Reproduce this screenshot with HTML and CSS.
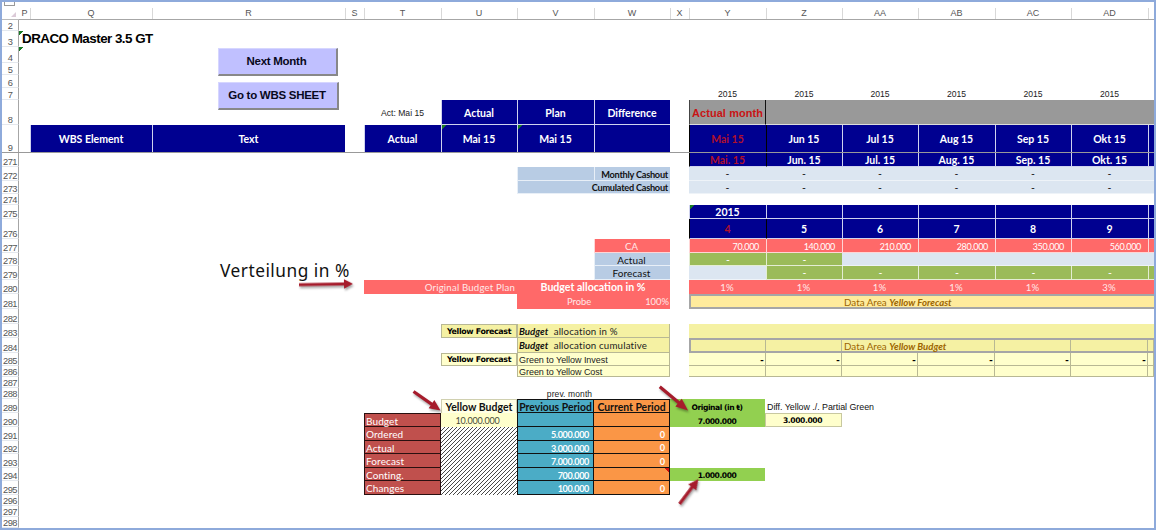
FILE: index.html
```html
<!DOCTYPE html>
<html lang="de">
<head>
<meta charset="utf-8">
<title>DRACO Master</title>
<link rel="stylesheet" href="styles.css">
</head>
<body>
<main class="sheet">
  <div class="corner r1 hd"><span class="outline-tab"></span><svg class="tri" viewBox="0 0 5 5"><path d="M5 0V5H0Z"/></svg></div>
  <div class="ch p r1">P</div><div class="ch q r1">Q</div><div class="ch r r1">R</div><div class="ch s r1">S</div><div class="ch t r1">T</div><div class="ch u r1">U</div><div class="ch v r1">V</div><div class="ch w r1">W</div><div class="ch x r1">X</div><div class="ch y r1">Y</div><div class="ch z r1">Z</div><div class="ch aa r1">AA</div><div class="ch ab r1">AB</div><div class="ch ac r1">AC</div><div class="ch ad r1">AD</div><div class="ch ae r1"></div>

  <div class="rh r2">2</div><div class="rh r3">3</div><div class="rh r4">4</div><div class="rh r5">5</div><div class="rh r6">6</div><div class="rh r7">7</div><div class="rh r8">8</div><div class="rh r9">9</div>
  <div class="rh r271">271</div><div class="rh r272">272</div><div class="rh r273">273</div><div class="rh r274">274</div><div class="rh r275">275</div><div class="rh r276">276</div><div class="rh r277">277</div><div class="rh r278">278</div><div class="rh r279">279</div><div class="rh r280">280</div><div class="rh r281">281</div><div class="rh r282">282</div><div class="rh r283">283</div><div class="rh r284">284</div><div class="rh r285">285</div><div class="rh r286">286</div><div class="rh r287">287</div><div class="rh r288">288</div><div class="rh r289">289</div><div class="rh r290">290</div><div class="rh r291">291</div><div class="rh r292">292</div><div class="rh r293">293</div><div class="rh r294">294</div><div class="rh r295">295</div><div class="rh r296">296</div><div class="rh r297">297</div><div class="rh r298">298</div>

  <h1 class="title r3">DRACO Master 3.5 GT</h1>
  <div class="p r3 note"></div><div class="p r4 note"></div>
  <div class="buttons">
    <button class="btn">Next Month</button>
    <button class="btn wide">Go to WBS SHEET</button>
  </div>

  <div class="y r7 year">2015</div><div class="z r7 year">2015</div><div class="aa r7 year">2015</div><div class="ab r7 year">2015</div><div class="ac r7 year">2015</div><div class="ad r7 year">2015</div>

  <div class="t r8 act">Act: Mai 15</div>
  <div class="u r8 navy">Actual</div><div class="v r8 navy">Plan</div><div class="w r8 navy">Difference</div>
  <div class="y r8 grey month">Actual month</div><div class="rest r8 grey"></div>

  <div class="q r9 navy">WBS Element</div><div class="r r9 navy">Text</div>
  <div class="t r9 navy">Actual</div><div class="u r9 navy note">Mai 15</div><div class="v r9 navy note">Mai 15</div><div class="w r9 navy"></div>
  <div class="y r9 navy now">Mai 15</div><div class="z r9 navy">Jun 15</div><div class="aa r9 navy">Jul 15</div><div class="ab r9 navy">Aug 15</div><div class="ac r9 navy">Sep 15</div><div class="ad r9 navy">Okt 15</div><div class="ae r9 navy"></div>
  <div class="freeze r9"></div>

  <div class="y r271 navy now">Mai. 15</div><div class="z r271 navy">Jun. 15</div><div class="aa r271 navy">Jul. 15</div><div class="ab r271 navy">Aug. 15</div><div class="ac r271 navy">Sep. 15</div><div class="ad r271 navy">Okt. 15</div><div class="ae r271 navy"></div>

  <div class="v r272 blue"></div><div class="w r272 blue strong">Monthly Cashout</div>
  <div class="vw r273 blue strong">Cumulated Cashout</div>
  <div class="y r272 pale">-</div><div class="z r272 pale">-</div><div class="aa r272 pale">-</div><div class="ab r272 pale">-</div><div class="ac r272 pale">-</div><div class="ad r272 pale">-</div><div class="ae r272 pale"></div>
  <div class="y r273 pale">-</div><div class="z r273 pale">-</div><div class="aa r273 pale">-</div><div class="ab r273 pale">-</div><div class="ac r273 pale">-</div><div class="ad r273 pale">-</div><div class="ae r273 pale"></div>

  <div class="y r275 navy note">2015</div><div class="z r275 navy"></div><div class="aa r275 navy"></div><div class="ab r275 navy"></div><div class="ac r275 navy"></div><div class="ad r275 navy"></div><div class="ae r275 navy"></div>
  <div class="y r276 navy now">4</div><div class="z r276 navy">5</div><div class="aa r276 navy">6</div><div class="ab r276 navy">7</div><div class="ac r276 navy">8</div><div class="ad r276 navy">9</div><div class="ae r276 navy"></div>

  <div class="w r277 red">CA</div>
  <div class="y r277 red num">70.000</div><div class="z r277 red num">140.000</div><div class="aa r277 red num">210.000</div><div class="ab r277 red num">280.000</div><div class="ac r277 red num">350.000</div><div class="ad r277 red num">560.000</div><div class="ae r277 red"></div>
  <div class="w r278 blue">Actual</div>
  <div class="y r278 green">-</div><div class="z r278 green">-</div><div class="aae r278 pale"></div>
  <div class="w r279 blue">Forecast</div>
  <div class="y r279 pale"></div><div class="z r279 green">-</div><div class="aa r279 green">-</div><div class="ab r279 green">-</div><div class="ac r279 green">-</div><div class="ad r279 green">-</div><div class="ae r279 green"></div>

  <div class="caption">Verteilung in %</div>

  <div class="tu r280 red flat plan">Original Budget Plan</div><div class="vw r280 red flat alloc">Budget allocation in %</div>
  <div class="vw r281 red flat probe"><span>Probe</span><span>100%</span></div>
  <div class="y r280 red flat">1%</div><div class="z r280 red flat">1%</div><div class="aa r280 red flat">1%</div><div class="ab r280 red flat">1%</div><div class="ac r280 red flat">1%</div><div class="ad r280 red flat">3%</div><div class="ae r280 red flat"></div>
  <div class="yae r281 area forecast"></div><div class="aab r281 arealabel">Data Area&nbsp;<em>Yellow Forecast</em></div>

  <div class="u r283 tag deep">Yellow Forecast</div><div class="vw r283 line deep"><em>Budget</em>&nbsp; allocation in %</div>
  <div class="vw r284 line deep"><em>Budget</em>&nbsp; allocation cumulative</div>
  <div class="u r285 tag">Yellow Forecast</div><div class="vw r285 line tight">Green to Yellow Invest</div>
  <div class="vw r286 line tight">Green to Yellow Cost</div>

  <div class="yae r283 deepband"></div>
  <div class="y r284 ycell deep"></div><div class="z r284 ycell deep"></div><div class="aab r284 ycell deep"></div><div class="ac r284 ycell deep"></div><div class="ad r284 ycell deep"></div><div class="ae r284 ycell deep"></div>
  <div class="yae r284 area"></div><div class="aab r284 arealabel">Data Area&nbsp;<em>Yellow Budget</em></div>
  <div class="y r285 ycell">-</div><div class="z r285 ycell">-</div><div class="aa r285 ycell">-</div><div class="ab r285 ycell">-</div><div class="ac r285 ycell">-</div><div class="ad r285 ycell">-</div><div class="ae r285 ycell"></div>
  <div class="y r286 ycell"></div><div class="z r286 ycell"></div><div class="aa r286 ycell"></div><div class="ab r286 ycell"></div><div class="ac r286 ycell"></div><div class="ad r286 ycell"></div><div class="ae r286 ycell"></div>

  <div class="v r288 prev">prev. month</div>
  <div class="u r289 yhead">Yellow Budget</div><div class="v r289 teal head">Previous Period</div><div class="w r289 orange head">Current Period</div>
  <div class="t r290 brick">Budget</div><div class="u r290 ybudget">10.000.000</div><div class="v r290 teal"></div><div class="w r290 orange"></div>
  <div class="t r291 brick">Ordered</div><div class="v r291 teal">5.000.000</div><div class="w r291 orange">0</div>
  <div class="t r292 brick">Actual</div><div class="v r292 teal">3.000.000</div><div class="w r292 orange">0</div>
  <div class="t r293 brick">Forecast</div><div class="v r293 teal">7.000.000</div><div class="w r293 orange">0</div>
  <div class="t r294 brick">Conting.</div><div class="v r294 teal">700.000</div><div class="w r294 orange comment"></div>
  <div class="t r295 brick">Changes</div><div class="v r295 teal">100.000</div><div class="w r295 orange">0</div>
  <svg class="hatch" width="76" height="68"><defs><pattern id="diag" width="4" height="4" patternUnits="userSpaceOnUse"><path d="M-1 1L1 -1M0 4L4 0M3 5L5 3" stroke="#333" stroke-width=".9"/></pattern></defs><rect width="76" height="68" fill="url(#diag)"/></svg>

  <div class="xy r289 lime">Original (in ŧ)</div><div class="xy r290 lime">7.000.000</div><div class="xy r294 lime">1.000.000</div>
  <div class="zaa r289 diff">Diff. Yellow ./. Partial Green</div><div class="z r290 diffval">3.000.000</div>
</main>
<svg class="arrows" width="1156" height="530" viewBox="0 0 1156 530">
  <defs>
    <g id="arrow"><path d="M0 0L-9 -4.8V-1.5H-54V1.4H-9V4.8Z"/></g>
    <g id="short"><path d="M0 0L-11 -5V-1.7H-33V1.5H-11V5Z"/></g>
  </defs>
  <g class="ink">
    <use href="#arrow" transform="translate(353 283.8) rotate(-1)"/>
    <use href="#short" transform="translate(440.500 410.500) rotate(35)"/>
    <use href="#short" transform="translate(688 410.500) rotate(40) scale(1.12 1)"/>
    <use href="#short" transform="translate(698.500 479) rotate(-53) scale(.95 1)"/>
  </g>
</svg>
</body>
</html>
```
FILE: styles.css
```css
* { box-sizing: border-box; }
body { margin: 0; width: 1156px; height: 530px; overflow: hidden; background: #fff; font-family: Lato, sans-serif; }

.sheet {
  display: grid;
  width: 1156px;
  height: 530px;
  border: 2px solid #8eaadb;
  grid-template-columns: 17px 11px 122px 193px 19px 77px 76px 77px 76px 19px 77px 76px 76px 77px 76px 77px 6px;
  grid-template-rows:
    18px 11px 16px 16px 12px 13px 12px 25px 28px
    14px 14px 13px 11px 14px 20px 14px 13px 14px 14px
    15px 15px 14px 15px 13px 11px 11px 11px 14px 14px
    14px 13px 14px 13px 14px 11px 11px 11px;
}
.sheet > div { display: flex; align-items: center; justify-content: center; min-width: 0; min-height: 0; white-space: nowrap; line-height: 1; font-size: 10.5px; padding-top: 2px; }

/* columns */
.hd, .sheet > .rh { grid-column: 1; }
.p { grid-column: 2; } .q { grid-column: 3; } .r { grid-column: 4; } .s { grid-column: 5; }
.t { grid-column: 6; } .u { grid-column: 7; } .v { grid-column: 8; } .w { grid-column: 9; } .x { grid-column: 10; }
.y { grid-column: 11; } .z { grid-column: 12; } .aa { grid-column: 13; } .ab { grid-column: 14; }
.ac { grid-column: 15; } .ad { grid-column: 16; } .ae { grid-column: 17; }
.tu { grid-column: 6 / 8; } .vw { grid-column: 8 / 10; } .xy { grid-column: 10 / 12; } .zaa { grid-column: 12 / 14; }
.aab { grid-column: 13 / 15; } .aae { grid-column: 13 / 18; } .yae { grid-column: 11 / 18; } .rest { grid-column: 12 / 18; }

/* rows */
.r1 { grid-row: 1; } .r2 { grid-row: 2; } .r3 { grid-row: 3; } .r4 { grid-row: 4; } .r5 { grid-row: 5; }
.r6 { grid-row: 6; } .r7 { grid-row: 7; } .r8 { grid-row: 8; } .r9 { grid-row: 9; }
.r271 { grid-row: 10; } .r272 { grid-row: 11; } .r273 { grid-row: 12; } .r274 { grid-row: 13; } .r275 { grid-row: 14; }
.r276 { grid-row: 15; } .r277 { grid-row: 16; } .r278 { grid-row: 17; } .r279 { grid-row: 18; } .r280 { grid-row: 19; }
.r281 { grid-row: 20; } .r282 { grid-row: 21; } .r283 { grid-row: 22; } .r284 { grid-row: 23; } .r285 { grid-row: 24; }
.r286 { grid-row: 25; } .r287 { grid-row: 26; } .r288 { grid-row: 27; } .r289 { grid-row: 28; } .r290 { grid-row: 29; }
.r291 { grid-row: 30; } .r292 { grid-row: 31; } .r293 { grid-row: 32; } .r294 { grid-row: 33; } .r295 { grid-row: 34; }
.r296 { grid-row: 35; } .r297 { grid-row: 36; } .r298 { grid-row: 37; }

/* headings of the grid */
.sheet > .ch { font: 9px/1 "Liberation Sans", sans-serif; color: #555; padding-top: 6px; border-bottom: 1px solid #a6a6a6; background: linear-gradient(#d8d8d8, #d8d8d8) left bottom / 1px 11px no-repeat; }
.sheet > .ch.p { background: none; }
.sheet > .corner { position: relative; border-bottom: 1px solid #bbb; }
.outline-tab { position: absolute; left: 2px; top: 0; width: 11px; height: 4px; border: 1px solid #999; border-top: 0; }
.tri { position: absolute; right: 3px; bottom: 2px; width: 5px; height: 5px; fill: #dccbd8; }
.sheet > .rh { align-items: flex-end; font: 9.3px/8px "Liberation Sans", sans-serif; letter-spacing: -.5px; color: #555; border-right: 1px solid #a6a6a6; border-bottom: 1px solid #e4e8ee; padding: 0; }

.title { grid-column: 2 / 4; margin: 0; padding-left: 3px; font: bold 13.4px/16px "Liberation Sans", sans-serif; letter-spacing: -.52px; color: #000; white-space: nowrap; }
.note { background-image: linear-gradient(135deg, #197a26 3px, transparent 3.5px); background-repeat: no-repeat; }
.sheet > .buttons { grid-column: 4; grid-row: 4 / 9; flex-direction: column; align-items: flex-start; justify-content: flex-start; gap: 6px; padding: 1px 0 0 66px; }
.btn { width: 120px; height: 28px; padding: 0 2px 0 0; border: 1px solid #d6d6ff; border-right: 2px solid #888; border-bottom: 2px solid #888; background: #c0c0ff; font: bold 11.5px/1 "Liberation Sans", sans-serif; color: #080820; letter-spacing: -.28px; }
.wide { width: 121px; }

.sheet > .year { font: 8.6px/1 "Liberation Sans", sans-serif; color: #222; align-items: flex-end; padding-bottom: 1px; }
.sheet > .act { font: 8.6px/1 "Liberation Sans", sans-serif; color: #222; padding-top: 1px; }
.sheet > .navy { background-color: #000090; color: #fff; font-weight: bold; border-left: 1px solid #cfd2ee; border-bottom: 1px solid #cfd2ee; padding-right: 1px; }
.sheet > .now { color: #b0102c; border-left-color: #000; }
.sheet > .now + .navy { border-left-color: #000; }
.sheet > .grey { background: #999; border-bottom: 1px solid #ddd; }
.sheet > .month { color: #c81414; font: bold 10.9px/1 "Liberation Sans", sans-serif; border-left: 1px solid #444; border-right: 1px solid #111; letter-spacing: .12px; }
.sheet > .freeze { grid-column: 1 / 18; align-self: end; height: 1px; background: #999; padding: 0; }

.sheet > .blue { background: #b8cce4; color: #111; border-left: 1px solid #e8eff7; border-bottom: 1px solid #e8eff7; letter-spacing: .1px; font-size: 10px; padding: 1px 2px 0 0; }
.sheet > .strong { font-weight: bold; justify-content: flex-end; padding-top: 2px; font-size: 9.2px; letter-spacing: -.25px; }
.sheet > .pale { background: #dce6f1; border-bottom: 1px solid #eef3f8; color: #222; }
.sheet > .red { background: #ff6969; color: #ffe8e8; border-left: 1px solid #ffd5d5; border-bottom: 1px solid #ffd5d5; font-size: 9.6px; padding-right: 2px; }
.sheet > .num { justify-content: flex-end; padding-right: 7px; font-size: 9px; letter-spacing: -.3px; color: #fff; }
.sheet > .flat { border-color: transparent; }
.sheet > .plan { justify-content: flex-end; padding-right: 2px; letter-spacing: .2px; }
.sheet > .alloc { color: #fff; font-weight: bold; font-size: 10.6px; }
.sheet > .probe { justify-content: space-between; padding: 1px 1px 0 49px; font-size: 9.4px; }
.sheet > .green { background: #9bbb59; color: #fff; border-left: 1px solid #e4edd3; border-bottom: 1px solid #e4edd3; }

.sheet > .caption { grid-column: 4; grid-row: 17 / 20; justify-content: flex-start; padding: 0 0 6px 68px; font: 17.3px/1 "Noto Sans", sans-serif; letter-spacing: .5px; color: #111; }

.sheet > .area { border: 2px solid #a6a6a6; border-right: 0; z-index: 1; }
.sheet > .forecast { background: #ffeb9c; }
.sheet > .arealabel { z-index: 2; justify-content: flex-start; padding-left: 2px; color: #9c6500; font-size: 9.8px; }
.arealabel em { font-weight: bold; font-size: 9.6px; }
.sheet > .deepband { background: #f5f1a3; }
.sheet > .tag { background: #ffffcc; font: bold 7.9px/1 "DejaVu Sans", sans-serif; color: #000; border: 1px solid #b8b894; letter-spacing: -.35px; padding-top: 1px; }
.sheet > .line { background: #ffffcc; justify-content: flex-start; padding-left: 1px; border: 1px solid #b8b894; border-top: 0; color: #222; font-size: 9.7px; letter-spacing: .18px; }
.sheet > .tight { font: 9px/1 "Liberation Sans", sans-serif; letter-spacing: -.04px; }
.line em { font-weight: bold; letter-spacing: 0; color: #111; }
.sheet > .ycell { background: #ffffcc; border-right: 1px solid #b8b894; border-bottom: 1px solid #b8b894; justify-content: flex-end; padding-right: 1px; color: #000; font-weight: bold; }
.sheet > .tag.deep, .sheet > .line.deep, .sheet > .ycell.deep { background: #f5f1a3; }

.sheet > .prev { font: 8.5px/1 "Liberation Sans", sans-serif; color: #222; padding-left: 28px; letter-spacing: .1px; }
.sheet > .yhead { background: #ffffe6; font-weight: bold; border: 1px solid #d0d0b0; border-bottom: 0; color: #111; font-size: 10.5px; }
.sheet > .ybudget { background: #ffffcc; color: #4a4a3a; font-size: 9px; letter-spacing: -.2px; padding: 1px 3px 0 0; }
.sheet > .brick { background: #c0504d; color: #fff; border: 1px solid #2a1010; border-top: 0; justify-content: flex-start; padding: 1px 0 0 1px; font-size: 10px; letter-spacing: .1px; }
.sheet > .brick.r290 { border-top: 1px solid #2a1010; }
.sheet > .teal { background: #4bacc6; color: #fff; border: 1px solid #111; border-top: 0; justify-content: flex-end; padding-right: 4px; font-weight: bold; font-size: 9px; letter-spacing: -.3px; }
.sheet > .orange { background: #fa9646; color: #fff; border-right: 1px solid #111; border-bottom: 1px solid #111; justify-content: flex-end; padding-right: 4px; font-weight: bold; font-size: 9.2px; }
.sheet > .head { border-top: 1px solid #111; color: #111; justify-content: center; padding: 2px 0 0; font-size: 10.4px; letter-spacing: 0; }
.sheet > .comment { background: linear-gradient(225deg, #d01010 3px, transparent 3.5px), #fa9646; }
.hatch { grid-column: 7; grid-row: 30 / 35; background: #fff; }
.sheet > .lime { background: #92d050; font: bold 7.6px/1 "DejaVu Sans", sans-serif; color: #000; letter-spacing: -.45px; padding-right: 1px; padding-top: 3px; margin-right: 1px; }
.sheet > .diff { font: 8.9px/1 "Liberation Sans", sans-serif; justify-content: flex-start; padding-left: 1px; color: #111; letter-spacing: -.03px; }
.sheet > .diffval { background: #ffffcc; border: 1px solid #c8c8a0; font: bold 7.6px/1 "DejaVu Sans", sans-serif; color: #000; letter-spacing: -.4px; margin-left: -1px; padding-right: 2px; }

/* pointers drawn over the sheet */
.arrows { position: absolute; left: 0; top: 0; pointer-events: none; z-index: 5; }
.ink { fill: #a61c2c; filter: drop-shadow(1px 2px 1px rgba(0, 0, 0, .35)); }
```
